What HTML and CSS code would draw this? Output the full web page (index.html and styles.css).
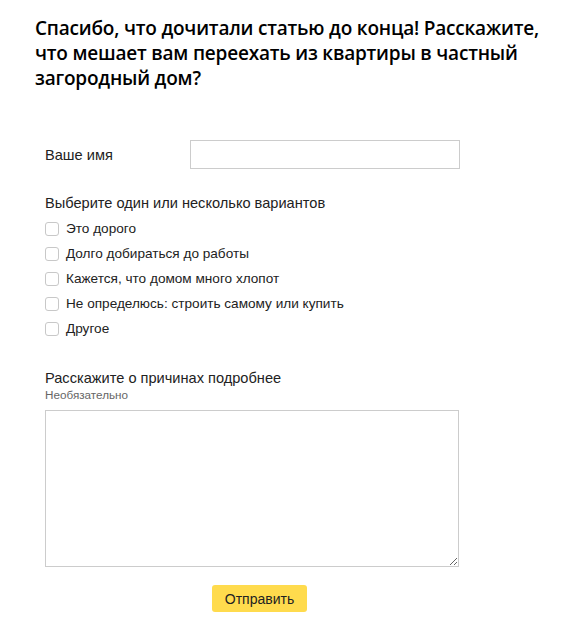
FILE: index.html
```html
<!DOCTYPE html>
<html lang="ru">
<head>
<meta charset="utf-8">
<link rel="stylesheet" href="styles.css">
</head>
<body>
<div class="page">
  <h1 class="title">Спасибо, что дочитали статью до конца! Расскажите, что мешает вам переехать из квартиры в частный загородный дом?</h1>
  <form class="form">
    <div class="name-row">
      <label class="name-label">Ваше имя</label>
      <input class="text-input" type="text">
    </div>
    <div class="group">
      <div class="group-title">Выберите один или несколько вариантов</div>
      <label class="check"><span class="box"></span>Это дорого</label>
      <label class="check"><span class="box"></span>Долго добираться до работы</label>
      <label class="check"><span class="box"></span>Кажется, что домом много хлопот</label>
      <label class="check"><span class="box"></span>Не определюсь: строить самому или купить</label>
      <label class="check"><span class="box"></span>Другое</label>
    </div>
    <div class="details">
      <div class="details-title">Расскажите о причинах подробнее</div>
      <div class="hint">Необязательно</div>
      <textarea class="area"></textarea>
    </div>
    <div class="actions">
      <button type="button" class="submit">Отправить</button>
    </div>
  </form>
</div>
</body>
</html>
```
FILE: styles.css
```css
* { box-sizing: border-box; }
body {
  margin: 0;
  background: #fff;
  font-family: "Liberation Sans", Arial, sans-serif;
  color: #222;
}
.page {
  padding: 16px 0 0 35px;
}
.title {
  margin: 0;
  width: 520px;
  font-family: "Open Sans", sans-serif;
  font-weight: 600;
  font-size: 19px;
  line-height: 25px;
  color: #000;
  letter-spacing: -0.2px;
}
.form {
  padding: 49px 0 0 10px;
  font-size: 14.6px;
}
.name-row {
  display: flex;
  align-items: center;
  height: 29px;
}
.name-label {
  width: 145px;
  color: #222;
}
.text-input {
  width: 270px;
  height: 29px;
  border: 1px solid #ccc;
  border-radius: 0;
  margin: 0;
  padding: 0 8px;
}
.group {
  padding-top: 26px;
}
.group-title {
  line-height: 17px;
  margin-bottom: 4px;
}
.check {
  display: flex;
  align-items: center;
  height: 25px;
  line-height: 17px;
  font-size: 13.6px;
}
.box {
  width: 14px;
  height: 14px;
  border: 1px solid #c8c8c8;
  border-radius: 3px;
  margin-right: 7px;
  flex: none;
}
.details {
  padding-top: 29px;
}
.details-title {
  line-height: 17px;
}
.hint {
  font-size: 11.7px;
  color: #666;
  line-height: 15px;
  margin-bottom: 8px;
}
.area {
  display: block;
  width: 414px;
  height: 157px;
  border: 1px solid #ccc;
  margin: 0;
  border-radius: 0;
  resize: vertical;
}
.actions {
  padding: 18px 0 0 167px;
}
.submit {
  width: 95px;
  height: 27px;
  background: #ffdb4d;
  border: none;
  border-radius: 3px;
  font-family: "Liberation Sans", Arial, sans-serif;
  font-size: 14px;
  color: #222;
  padding: 0;
}
```
